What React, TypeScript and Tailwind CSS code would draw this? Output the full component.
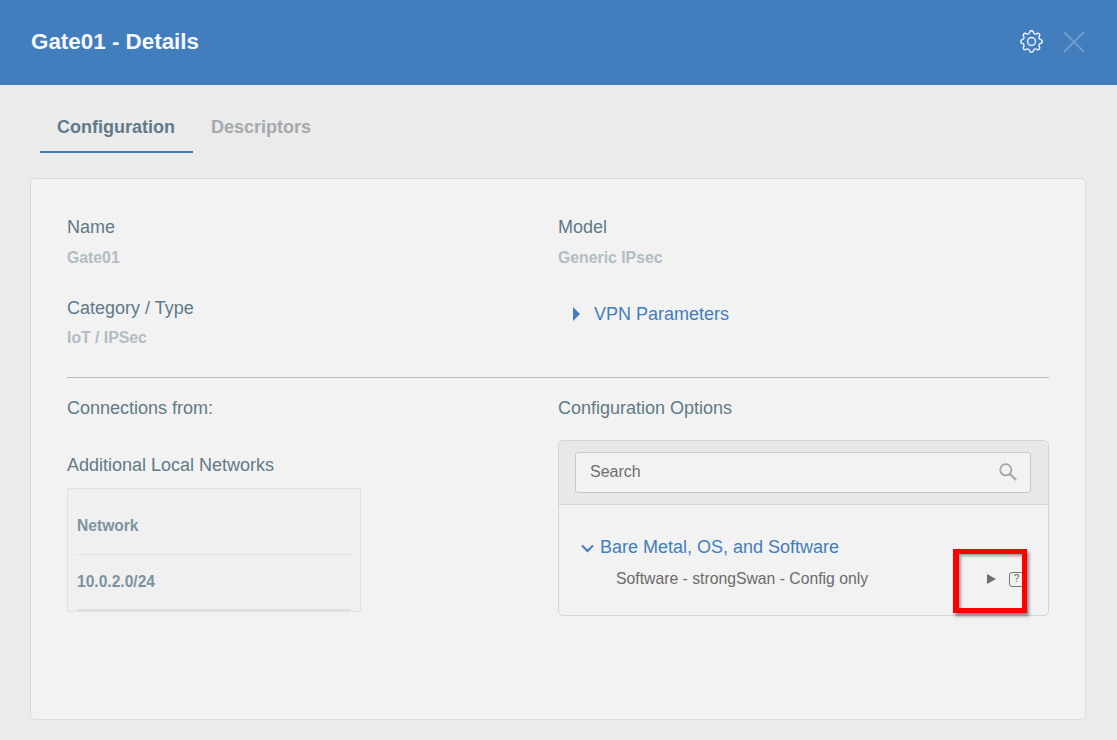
import { BsGear } from "react-icons/bs";

const App = () => {
  return (
    <div className="h-[740px] w-[1117px] overflow-hidden bg-[#ebebeb] font-['Liberation_Sans',Arial,sans-serif] relative">
      <header className="flex h-[85px] items-center justify-between bg-[#427dbd] pb-[2px] pl-[31px] pr-[32px]">
        <h1 className="text-[22.4px] font-bold text-[#f5f7fa]">Gate01 - Details</h1>
        <div className="flex items-center gap-[20px]">
          <BsGear className="h-[23px] w-[23px] text-[#f2f5f9]" />
          <svg viewBox="0 0 22 22" className="h-[22px] w-[22px]">
            <path d="M1 1 L21 21 M21 1 L1 21" stroke="#6f9bcb" strokeWidth="2" fill="none" />
          </svg>
        </div>
      </header>

      <div className="flex h-[68px] pl-[40px]">
        <div className="flex h-full items-center border-b-2 border-[#427dbd] pl-[17px] pr-[18px] pt-[18px] text-[18px] font-bold text-[#5f7a88]">
          Configuration
        </div>
        <div className="flex h-full items-center px-[18px] pb-[2px] pt-[18px] text-[18px] font-bold text-[#a4aaad]">
          Descriptors
        </div>
      </div>

      <div className="ml-[30px] mt-[25px] h-[542px] w-[1056px] rounded-[5px] border border-[#dcdcdc] bg-[#f2f2f2] px-[36px] pt-[36px]">
        <div className="grid h-[163px] grid-cols-2 border-b border-[#b9b9b9]">
          <div>
            <div className="text-[18px] leading-[24px] text-[#5f7a88]">Name</div>
            <div className="mt-[9px] text-[15.8px] leading-[20px] font-bold text-[#b1bdc3]">Gate01</div>
            <div className="mt-[28px] text-[18px] leading-[24px] text-[#5f7a88]">Category / Type</div>
            <div className="mt-[8px] text-[15.8px] leading-[20px] font-bold text-[#b1bdc3]">IoT / IPSec</div>
          </div>
          <div>
            <div className="text-[18px] leading-[24px] text-[#5f7a88]">Model</div>
            <div className="mt-[9px] text-[15.8px] leading-[20px] font-bold text-[#b1bdc3]">Generic IPsec</div>
            <div className="mt-[34px] flex items-center pl-[15px] text-[18px] leading-[24px] text-[#427dbd]">
              <span className="mr-[14px] h-0 w-0 border-y-[7px] border-l-[7px] border-y-transparent border-l-[#427dbd]" />
              VPN Parameters
            </div>
          </div>
        </div>

        <div className="grid grid-cols-2 pt-[18px]">
          <div>
            <div className="text-[18px] leading-[24px] text-[#5f7a88]">Connections from:</div>
            <div className="mt-[33px] text-[18px] leading-[24px] text-[#5f7a88]">Additional Local Networks</div>
            <div className="mt-[11px] h-[124px] w-[294px] rounded-[2px] border border-[#e0e0e0] bg-[#f0f0f0] px-[9px]">
              <div className="flex h-[66px] items-center border-b border-[#e0e0e0] pt-[8px] text-[15.6px] font-bold text-[#7d949f]">
                Network
              </div>
              <div className="flex h-[56px] items-center border-b-2 border-[#e0e0e0] text-[15.6px] font-bold text-[#7d949f]">
                10.0.2.0/24
              </div>
            </div>
          </div>
          <div>
            <div className="text-[18px] leading-[24px] text-[#5f7a88]">Configuration Options</div>
            <div className="mt-[20px] h-[176px] rounded-[5px] border border-[#d4d4d4]">
              <div className="flex h-[64px] items-center rounded-t-[5px] border-b border-[#d4d4d4] bg-[#e8e8e8] pl-[16px] pr-[17px]">
                <div className="flex h-[41px] w-full items-center justify-between rounded-[3px] border border-[#c8c8c8] bg-[#f2f2f2] pb-[2px] pl-[14px] pr-[13px] text-[16px] text-[#6e6e6e]">
                  Search
                  <svg viewBox="0 0 18 18" className="h-[18px] w-[18px]">
                    <circle cx="6.8" cy="6.8" r="5.6" stroke="#a0a8a8" strokeWidth="1.8" fill="none" />
                    <path d="M10.8 10.8 L17 17" stroke="#a0a8a8" strokeWidth="2.2" fill="none" />
                  </svg>
                </div>
              </div>
              <div className="pl-[22px] pr-[24px] pt-[31px]">
                <div className="flex items-center text-[18px] leading-[22px] text-[#427dbd]">
                  <svg viewBox="0 0 13 9" className="mr-[6px] mt-[2px] h-[9px] w-[13px]">
                    <path d="M1 1.5 L6.5 7 L12 1.5" stroke="#427dbd" strokeWidth="2" fill="none" />
                  </svg>
                  Bare Metal, OS, and Software
                </div>
                <div className="mt-[11px] flex items-center justify-between pl-[35px] text-[15.75px] leading-[20px] text-[#6b6b6b]">
                  Software - strongSwan - Config only
                  <div className="flex items-center gap-[13px]">
                    <span className="h-0 w-0 border-y-[5.5px] border-l-[9px] border-y-transparent border-l-[#6e6e6e]" />
                    <span className="flex h-[15px] w-[15px] items-center justify-center rounded-[3px] border border-[#777] text-[10px] leading-none text-[#666]">
                      ?
                    </span>
                  </div>
                </div>
              </div>
            </div>
          </div>
        </div>
      </div>

      {/* red annotation box */}
      <div className="absolute left-[953px] top-[549px] h-[64px] w-[74px] border-[5px] border-l-[6px] border-[#ff0000] shadow-[2px_3px_3px_rgba(0,0,0,0.45),inset_2px_2px_3px_rgba(0,0,0,0.35)]" />
    </div>
  );
};

export default App;
